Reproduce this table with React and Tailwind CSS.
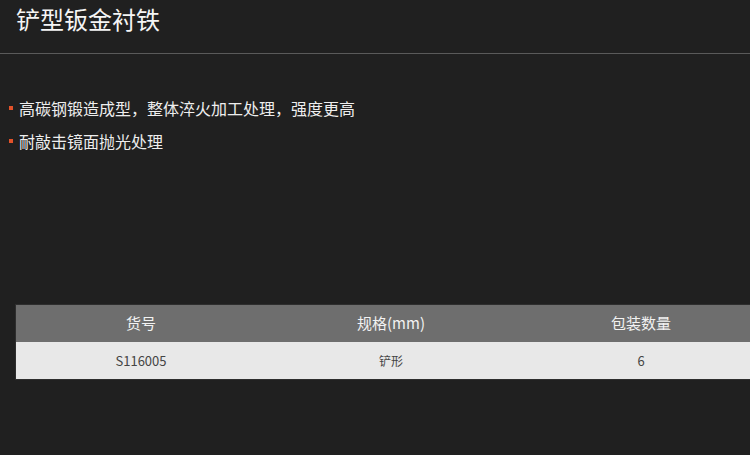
import React from 'react';

const features = [
  '高碳钢锻造成型，整体淬火加工处理，强度更高',
  '耐敲击镜面抛光处理',
];

const rows = [{ code: 'S116005', spec: '铲形', qty: '6' }];

export default function App() {
  return (
    <div
      className="w-[750px] h-[455px] overflow-hidden bg-[#202020] text-white"
      style={{ fontFamily: '"Microsoft YaHei", "Noto Sans CJK SC", sans-serif' }}
    >
      <div className="h-[54px] border-b border-[#5a5a5a] pl-4 pt-[3px]">
        <h1 className="text-[24px] leading-[32px] text-[#f5f5f5]">铲型钣金衬铁</h1>
      </div>

      <ul className="mt-[43px] flex flex-col gap-[11px] pl-[9px]">
        {features.map((f) => (
          <li key={f} className="flex items-center text-[16px] leading-[22px] text-[#eeeeee]">
            <span className="mr-[6px] h-[4px] w-[4px] bg-[#e2522a]" />
            {f}
          </li>
        ))}
      </ul>

      <div className="mt-[152px] ml-[15px] w-[752px] border border-[#2e2e2e]">
        <div className="grid grid-cols-3 h-[37px] bg-[#6e6e6e] text-[15px] text-[#f2f2f2]">
          <div className="flex items-center justify-center">货号</div>
          <div className="flex items-center justify-center">规格(mm)</div>
          <div className="flex items-center justify-center">包装数量</div>
        </div>
        {rows.map((r) => (
          <div key={r.code} className="grid grid-cols-3 h-[37px] bg-[#e8e8e8] text-[13px] text-[#444444]">
            <div className="flex items-center justify-center">{r.code}</div>
            <div className="flex items-center justify-center text-[12px]">{r.spec}</div>
            <div className="flex items-center justify-center">{r.qty}</div>
          </div>
        ))}
      </div>
    </div>
  );
}
